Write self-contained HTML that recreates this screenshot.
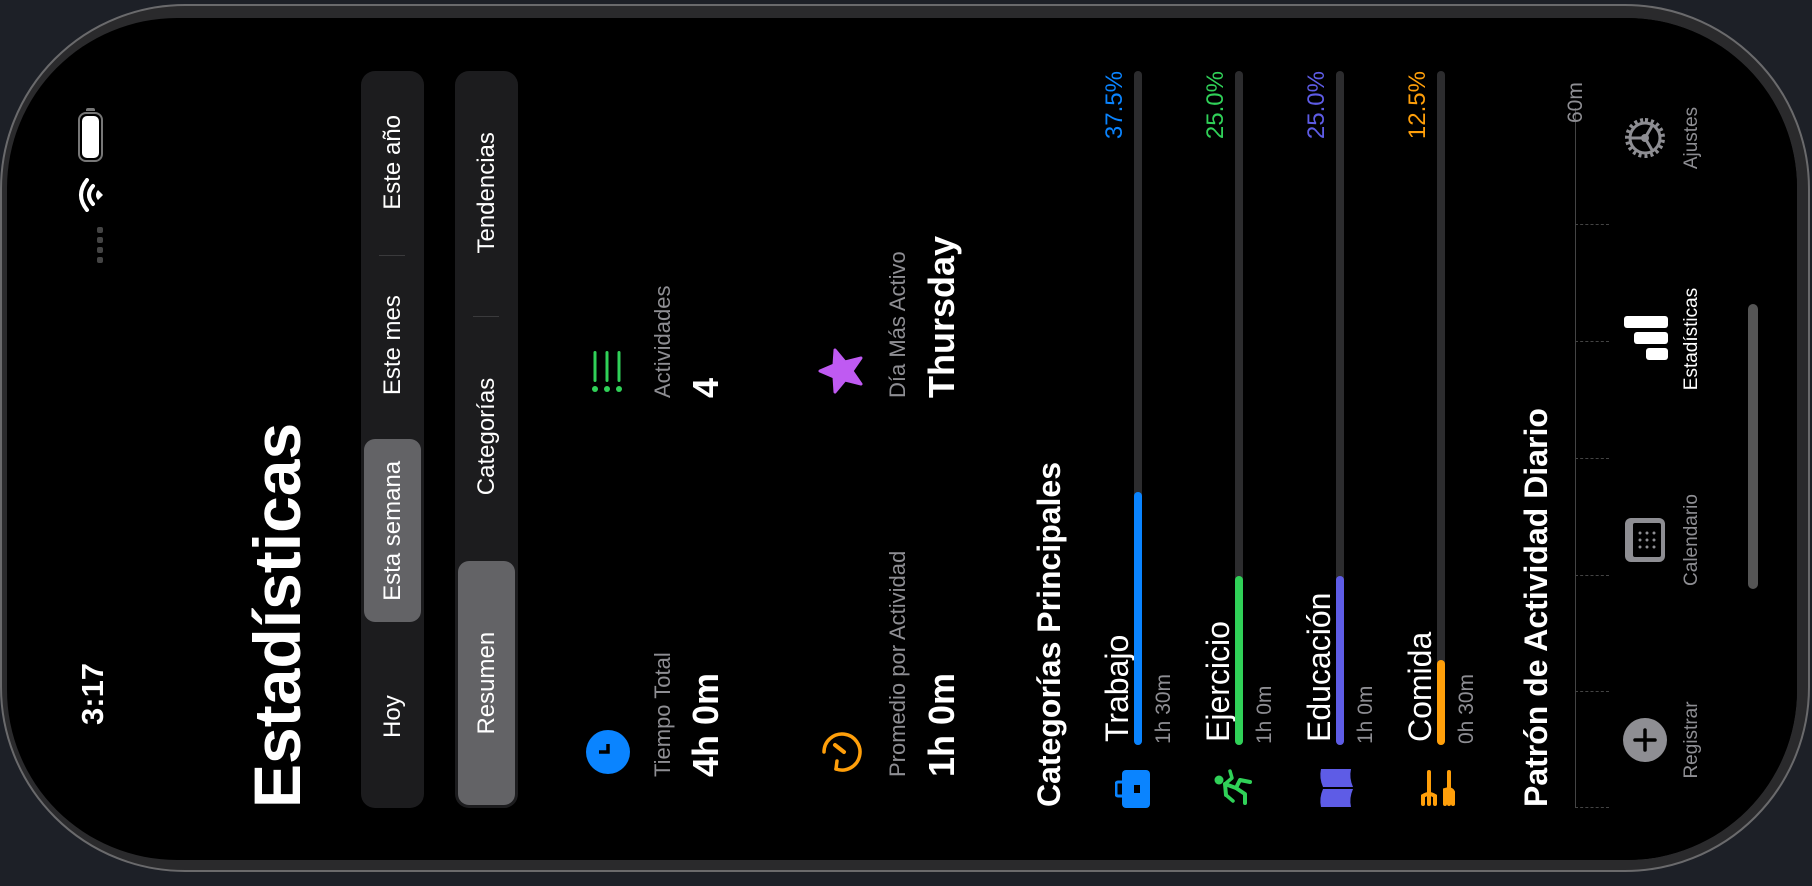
<!DOCTYPE html>
<html><head><meta charset="utf-8">
<style>
*{margin:0;padding:0;box-sizing:border-box}
html,body{width:1812px;height:886px;overflow:hidden;background:#1d2027;font-family:"Liberation Sans",sans-serif}
#rot{position:absolute;left:0;top:0;width:886px;height:1812px;transform-origin:0 0;transform:translate(0,886px) rotate(-90deg)}
.frame{position:absolute;left:14px;top:0;width:868px;height:1810px;border-radius:185px;background:#2a2a2c;border:2px solid #6a6a6c}
.screen{position:absolute;left:26px;top:7px;width:842px;height:1790px;border-radius:170px;background:#000;overflow:hidden}
.in{position:absolute;left:-6px;top:0;width:848px;height:1790px}
.a{position:absolute;white-space:nowrap;line-height:1}
.g{color:#8e8e93}
.w{color:#fff}
.seg{position:absolute;left:58px;width:737px;height:63px;background:#1c1c1e;border-radius:14px;display:flex}
.seg div{flex:1;display:flex;align-items:center;justify-content:center;color:#fff;font-size:24px;position:relative}
.seg .sel{background:#636366;border-radius:11px;margin:3px}
.sep{position:absolute;width:1px;height:26px;top:18px;background:#3a3a3c}
.track{position:absolute;left:121px;width:674px;height:8px;border-radius:4px;background:#2c2c2e}
.fill{position:absolute;left:0;top:0;height:8px;border-radius:4px}
</style></head><body>
<div id="rot">
<div class="frame"></div>
<div class="screen"><div class="in">
<div class="a w" style="left:141px;top:70px;font-size:31px;font-weight:bold">3:17</div>
<div style="position:absolute;left:704px;top:71px;width:50px;height:25px;border:2px solid #777;border-radius:8px;padding:2px"><div style="width:100%;height:100%;background:#fff;border-radius:5px"></div></div>
<div style="position:absolute;left:755px;top:79px;width:3px;height:9px;background:#777;border-radius:0 2px 2px 0"></div>
<svg style="position:absolute;left:654px;top:71px" width="34" height="26" viewBox="0 0 34 26"><path d="M2 9 Q17 -3 32 9" stroke="#fff" stroke-width="4" fill="none" stroke-linecap="round"/><path d="M8 15 Q17 7 26 15" stroke="#fff" stroke-width="4" fill="none" stroke-linecap="round"/><path d="M12 20 L17 25 L22 20 Q17 16 12 20Z" fill="#fff"/></svg>
<div style="position:absolute;left:603px;top:90px;width:38px;height:6px;display:flex;gap:4px"><i style="width:6px;height:6px;border-radius:2px;background:#444"></i><i style="width:6px;height:6px;border-radius:2px;background:#444"></i><i style="width:6px;height:6px;border-radius:2px;background:#444"></i><i style="width:6px;height:6px;border-radius:2px;background:#444"></i></div>

<div class="a w" style="left:58px;top:237px;font-size:66px;font-weight:bold">Estadísticas</div>

<div class="seg" style="top:354px"><div>Hoy</div><div class="sel">Esta semana</div><div>Este mes</div><div>Este año</div><span class="sep" style="left:552px"></span></div>
<div class="seg" style="top:448px"><div class="sel">Resumen</div><div>Categorías</div><div>Tendencias</div><span class="sep" style="left:491px"></span></div>

<svg style="position:absolute;left:92px;top:579px" width="44" height="44" viewBox="0 0 44 44"><circle cx="22" cy="22" r="22" fill="#0a84ff"/><path d="M22 13 V22 H30" stroke="#000" stroke-width="3.5" fill="none"/></svg>
<div class="a g" style="left:89px;top:645px;font-size:22px">Tiempo Total</div>
<div class="a w" style="left:89px;top:681px;font-size:36px;font-weight:bold">4h 0m</div>

<svg style="position:absolute;left:474px;top:584px" width="42" height="32" viewBox="0 0 42 32"><g fill="#30d158"><circle cx="3" cy="4" r="3"/><circle cx="3" cy="16" r="3"/><circle cx="3" cy="28" r="3"/><rect x="10" y="2.5" width="31" height="3" rx="1.5"/><rect x="10" y="14.5" width="31" height="3" rx="1.5"/><rect x="10" y="26.5" width="31" height="3" rx="1.5"/></g></svg>
<div class="a g" style="left:468px;top:645px;font-size:22px">Actividades</div>
<div class="a w" style="left:468px;top:681px;font-size:36px;font-weight:bold">4</div>

<svg style="position:absolute;left:92px;top:813px" width="44" height="44" viewBox="0 0 44 44"><path d="M22 4 A18 18 0 1 1 5 16" stroke="#ff9f0a" stroke-width="3.5" fill="none" stroke-linecap="round"/><path d="M5 16 L13 17" stroke="#ff9f0a" stroke-width="3.5" stroke-linecap="round"/><path d="M22 24 L29 15" stroke="#ff9f0a" stroke-width="4" stroke-linecap="round"/></svg>
<div class="a g" style="left:89px;top:880px;font-size:22px">Promedio por Actividad</div>
<div class="a w" style="left:89px;top:917px;font-size:36px;font-weight:bold">1h 0m</div>

<svg style="position:absolute;left:471px;top:810px" width="48" height="48" viewBox="0 0 48 48"><path d="M24 3 L30 17 L45 18 L33 28 L37 44 L24 35 L11 44 L15 28 L3 18 L18 17Z" fill="#bf5af2" stroke="#bf5af2" stroke-width="3" stroke-linejoin="round"/></svg>
<div class="a g" style="left:468px;top:880px;font-size:22px">Día Más Activo</div>
<div class="a w" style="left:468px;top:917px;font-size:36px;font-weight:bold">Thursday</div>

<div class="a w" style="left:59px;top:1026px;font-size:32px;font-weight:bold">Categorías Principales</div>

<svg style="position:absolute;left:57px;top:1108px" width="40" height="36" viewBox="0 0 40 36"><rect x="1" y="7" width="38" height="28" rx="4" fill="#0a84ff"/><rect x="13" y="1" width="14" height="8" rx="2" stroke="#0a84ff" stroke-width="3" fill="none"/><rect x="16" y="19" width="8" height="6" fill="#000"/></svg>
<div class="a w" style="left:124px;top:1094px;font-size:32px">Trabajo</div>
<div class="a" style="left:795px;top:1096px;font-size:24px;color:#0a84ff;transform:translateX(-100%)">37.5%</div>
<div class="track" style="top:1127px"><div class="fill" style="width:253px;background:#0a84ff"></div></div>
<div class="a g" style="left:122px;top:1146px;font-size:21px">1h 30m</div>

<svg style="position:absolute;left:58px;top:1207px" width="40" height="40" viewBox="0 0 40 40"><g fill="#30d158" stroke="#30d158" stroke-linecap="round" stroke-linejoin="round"><circle cx="28" cy="5" r="4.5" stroke="none"/><path d="M13 12 L24 11 L20 22 L28 26 L26 36" stroke-width="4" fill="none"/><path d="M24 11 L30 18 L37 16" stroke-width="3.5" fill="none"/><path d="M13 12 L7 19" stroke-width="3.5" fill="none"/><path d="M20 22 L14 31 L5 31" stroke-width="4" fill="none"/></g></svg>
<div class="a w" style="left:124px;top:1195px;font-size:32px">Ejercicio</div>
<div class="a" style="left:795px;top:1197px;font-size:24px;color:#30d158;transform:translateX(-100%)">25.0%</div>
<div class="track" style="top:1228px"><div class="fill" style="width:169px;background:#30d158"></div></div>
<div class="a g" style="left:122px;top:1247px;font-size:21px">1h 0m</div>

<svg style="position:absolute;left:58px;top:1312px" width="40" height="34" viewBox="0 0 40 34"><path d="M1 2 Q10 0 19 4 V34 Q10 30 1 32Z M21 4 Q30 0 39 2 V32 Q30 30 21 34Z" fill="#5e5ce6"/></svg>
<div class="a w" style="left:124px;top:1296px;font-size:32px">Educación</div>
<div class="a" style="left:795px;top:1298px;font-size:24px;color:#5e5ce6;transform:translateX(-100%)">25.0%</div>
<div class="track" style="top:1329px"><div class="fill" style="width:169px;background:#5e5ce6"></div></div>
<div class="a g" style="left:122px;top:1348px;font-size:21px">1h 0m</div>

<svg style="position:absolute;left:60px;top:1412px" width="36" height="38" viewBox="0 0 36 38"><g stroke="#ff9f0a" stroke-width="4" fill="none" stroke-linecap="round"><path d="M2 10 H34"/><path d="M2 4 H10 Q14 10 10 16 H2"/><path d="M2 30 H34"/><path d="M2 34 H14 Q18 32 16 26 H2"/></g></svg>
<div class="a w" style="left:124px;top:1397px;font-size:32px">Comida</div>
<div class="a" style="left:795px;top:1399px;font-size:24px;color:#ff9f0a;transform:translateX(-100%)">12.5%</div>
<div class="track" style="top:1430px"><div class="fill" style="width:85px;background:#ff9f0a"></div></div>
<div class="a g" style="left:122px;top:1449px;font-size:21px">0h 30m</div>

<div class="a w" style="left:59px;top:1513px;font-size:32px;font-weight:bold">Patrón de Actividad Diario</div>

<div style="position:absolute;left:58px;top:1568px;width:700px;height:1px;background:#444"></div>
<div class="a g" style="left:743px;top:1558px;font-size:21px">60m</div>
<div style="position:absolute;left:58px;top:1568px;width:1px;height:34px;border-left:1px dashed #444"></div>
<div style="position:absolute;left:174px;top:1568px;width:1px;height:34px;border-left:1px dashed #444"></div>
<div style="position:absolute;left:290px;top:1568px;width:1px;height:34px;border-left:1px dashed #444"></div>
<div style="position:absolute;left:407px;top:1568px;width:1px;height:34px;border-left:1px dashed #444"></div>
<div style="position:absolute;left:524px;top:1568px;width:1px;height:34px;border-left:1px dashed #444"></div>
<div style="position:absolute;left:641px;top:1568px;width:1px;height:34px;border-left:1px dashed #444"></div>

<div style="position:absolute;left:0;top:1605px;width:848px;height:190px;background:#000"></div>
<svg style="position:absolute;left:104px;top:1616px" width="44" height="44" viewBox="0 0 44 44"><circle cx="22" cy="22" r="22" fill="#8e8e93"/><path d="M22 12 V32 M12 22 H32" stroke="#000" stroke-width="3.5" stroke-linecap="round"/></svg>
<div class="a g" style="left:126px;top:1675px;font-size:19px;transform:translateX(-50%)">Registrar</div>
<svg style="position:absolute;left:303px;top:1617px" width="46" height="42" viewBox="0 0 46 42"><rect x="1" y="1" width="44" height="40" rx="6" fill="#8e8e93"/><rect x="6" y="9" width="34" height="28" rx="2" fill="#000"/><g fill="#8e8e93"><circle cx="16" cy="16" r="1.5"/><circle cx="23" cy="16" r="1.5"/><circle cx="30" cy="16" r="1.5"/><circle cx="16" cy="23" r="1.5"/><circle cx="23" cy="23" r="1.5"/><circle cx="30" cy="23" r="1.5"/><circle cx="16" cy="30" r="1.5"/><circle cx="23" cy="30" r="1.5"/><circle cx="30" cy="30" r="1.5"/></g></svg>
<div class="a g" style="left:326px;top:1675px;font-size:19px;transform:translateX(-50%)">Calendario</div>
<svg style="position:absolute;left:505px;top:1617px" width="46" height="44" viewBox="0 0 46 44"><rect x="1" y="22" width="12" height="22" rx="3" fill="#fff"/><rect x="17" y="10" width="12" height="34" rx="3" fill="#fff"/><rect x="33" y="0" width="12" height="44" rx="3" fill="#fff"/></svg>
<div class="a w" style="left:527px;top:1675px;font-size:19px;transform:translateX(-50%)">Estadísticas</div>
<svg style="position:absolute;left:704px;top:1614px" width="48" height="48" viewBox="0 0 48 48"><g stroke="#8e8e93" fill="none"><circle cx="24" cy="24" r="18" stroke-width="4" stroke-dasharray="3 3"/><circle cx="24" cy="24" r="15" stroke-width="3"/><path d="M24 24 V10 M24 24 L12 31 M24 24 L36 31" stroke-width="3"/></g><circle cx="24" cy="24" r="4" fill="#8e8e93"/></svg>
<div class="a g" style="left:728px;top:1675px;font-size:19px;transform:translateX(-50%)">Ajustes</div>

<div style="position:absolute;left:277px;top:1741px;width:285px;height:10px;border-radius:5px;background:#555"></div>
</div></div>
</div>
</body></html>
